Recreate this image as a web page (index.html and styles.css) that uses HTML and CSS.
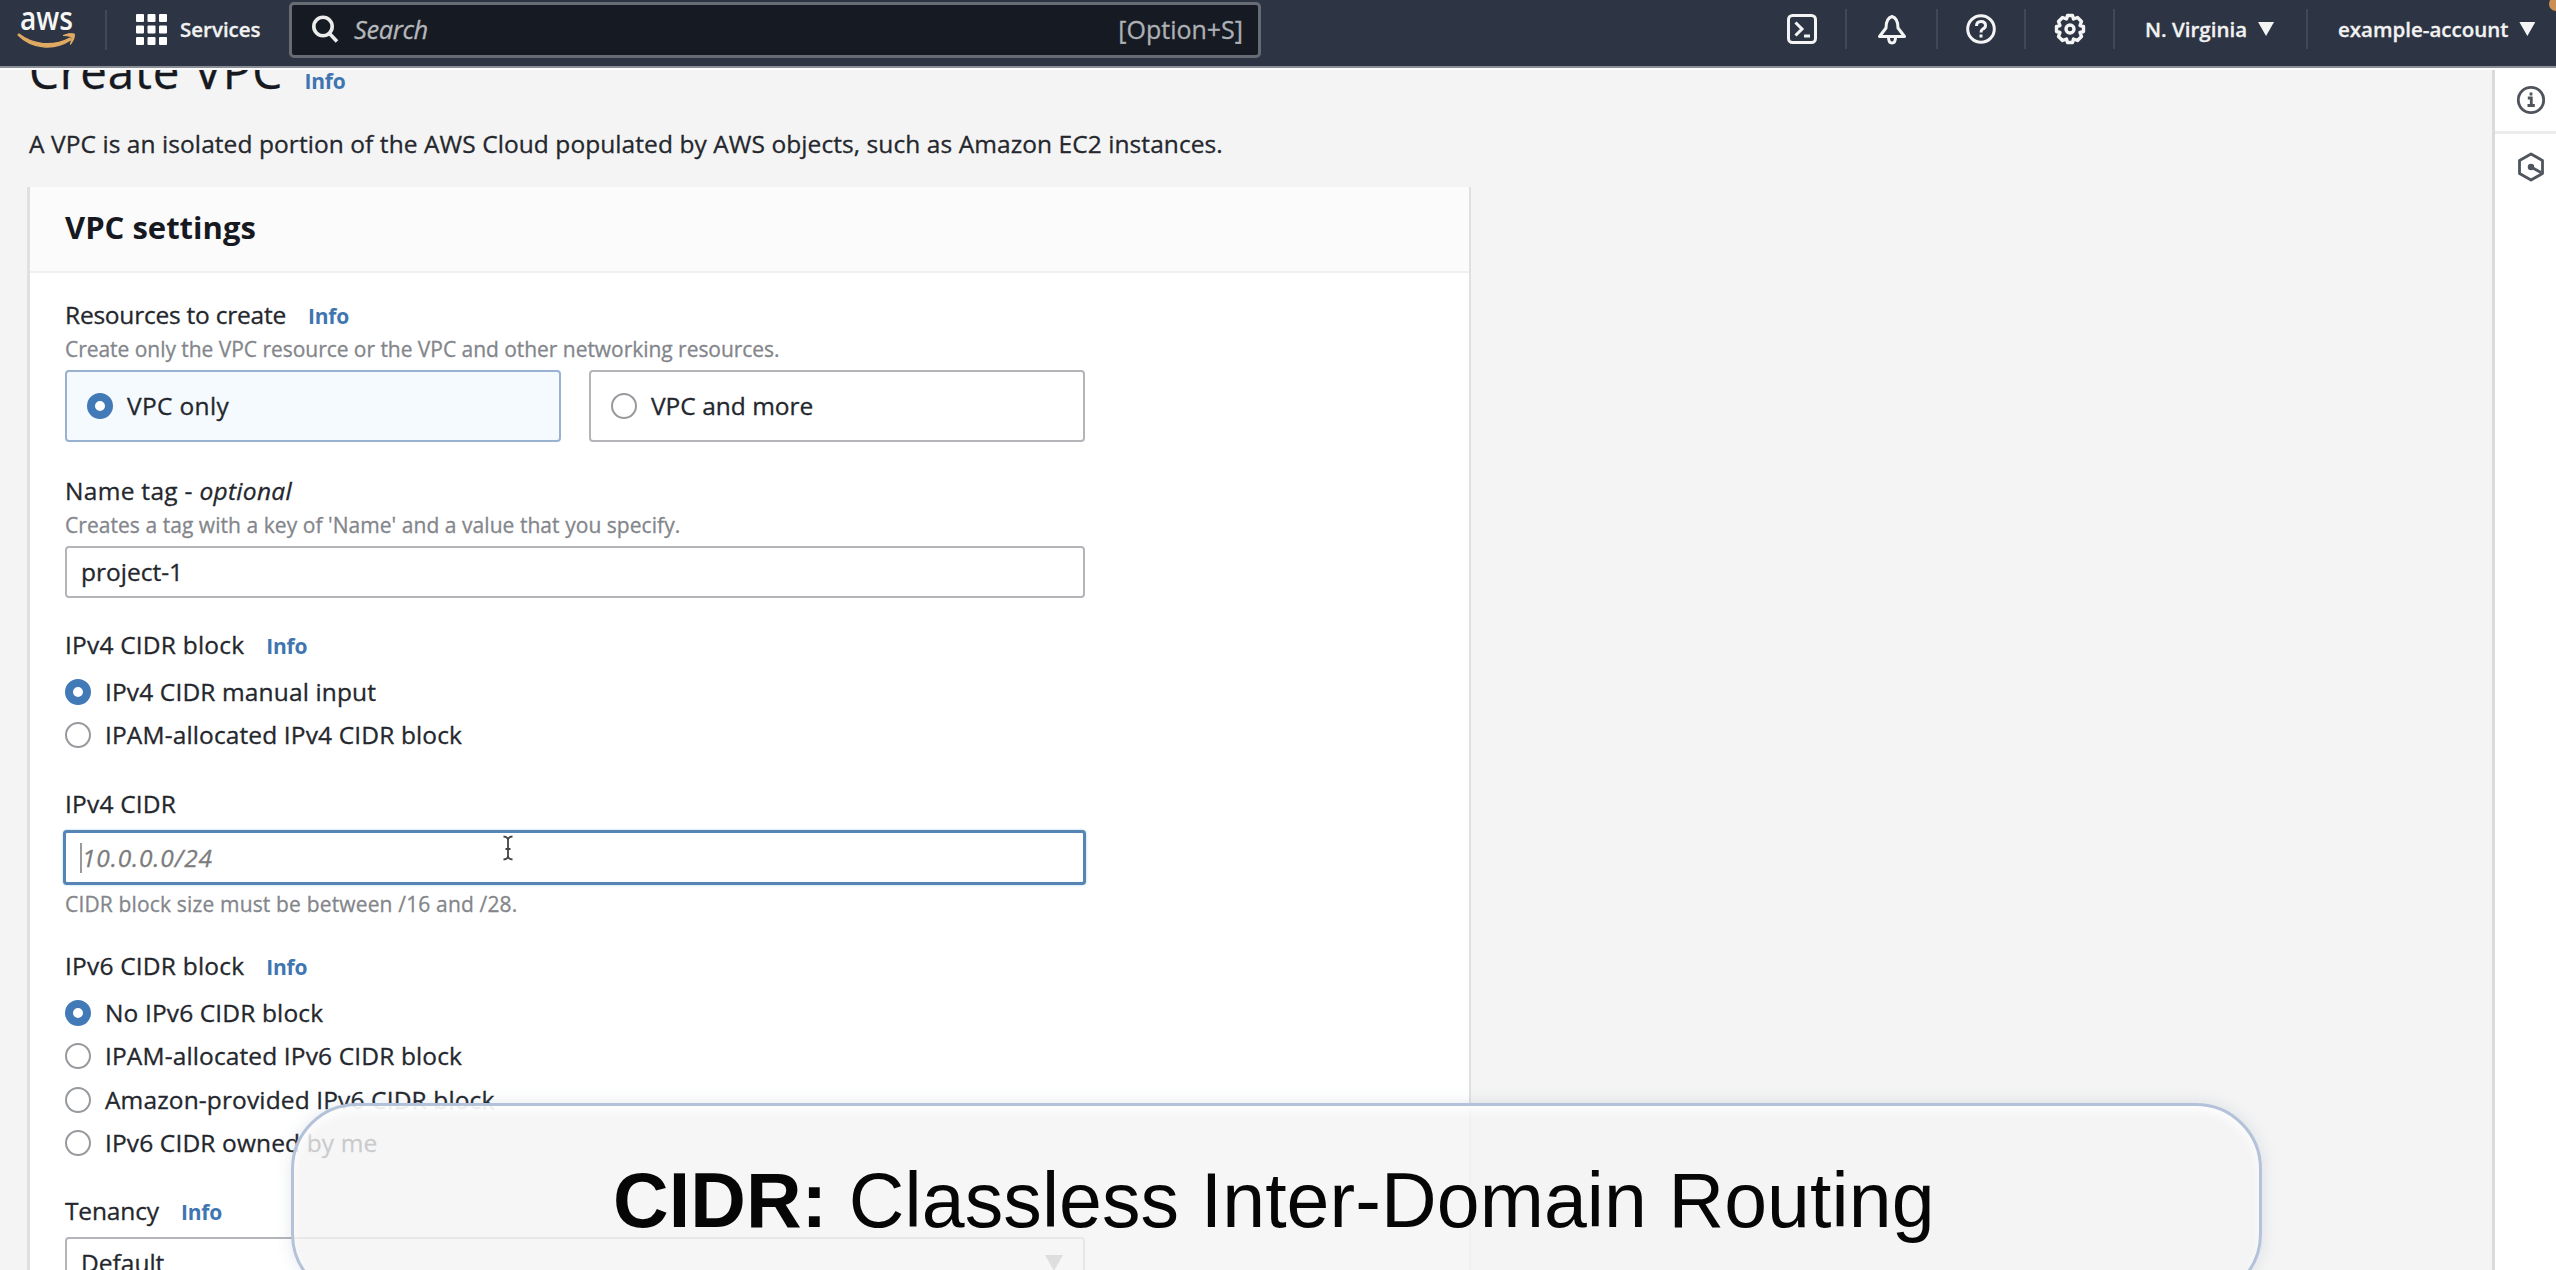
FILE: index.html
```html
<!DOCTYPE html>
<html lang="en">
<head>
<meta charset="utf-8">
<title>Create VPC</title>
<link rel="stylesheet" href="styles.css">
</head>
<body>
<header class="topbar">
  <svg class="logo" width="60" height="42" viewBox="0 0 60 42">
    <text class="logo-text" x="2" y="21" textLength="53" lengthAdjust="spacingAndGlyphs">aws</text>
    <path d="M1 25 C15 36 35 38 52 29 L52.500 31 C36 42 14 40 0 26 Z" fill="#e0aa62" stroke="#e0aa62" stroke-width="1.200" stroke-linejoin="round"/>
    <path d="M45 26.500 Q51 23.500 56.500 25 Q57 30 52.500 35.500 Q54 30 53 27.500 Q49 26.500 45 26.500 Z" fill="#e0aa62" stroke="#e0aa62"/>
  </svg>
  <span class="sep sep-logo"></span>
  <svg class="grid-icon" width="31" height="32" viewBox="0 0 31 32" fill="#fff">
    <rect x="0" y="0" width="8" height="8" rx="1"/><rect x="11.500" y="0" width="8" height="8" rx="1"/><rect x="23" y="0" width="8" height="8" rx="1"/>
    <rect x="0" y="11.500" width="8" height="8" rx="1"/><rect x="11.500" y="11.500" width="8" height="8" rx="1"/><rect x="23" y="11.500" width="8" height="8" rx="1"/>
    <rect x="0" y="23" width="8" height="8" rx="1"/><rect x="11.500" y="23" width="8" height="8" rx="1"/><rect x="23" y="23" width="8" height="8" rx="1"/>
  </svg>
  <span class="nav-text services">Services</span>
  <div class="search">
    <svg width="28" height="28" viewBox="0 0 28 28" fill="none" stroke="#ececec" stroke-width="3.600"><circle cx="12" cy="11.500" r="9.200"/><path d="M18.500 18.500 L26 26.500"/></svg>
    <span class="search-hint">Search</span>
    <span class="search-key">[Option+S]</span>
  </div>
  <nav class="tools">
    <span class="tool tool-shell"><svg width="32" height="32" viewBox="0 0 32 32" fill="none" stroke="#f4f4f4" stroke-width="3"><rect x="2.500" y="2.500" width="27" height="27" rx="4"/><path d="M9.500 9.500 L16 16 L9.500 22.500 M18 23 H24"/></svg></span>
    <span class="tool tool-bell"><svg width="32" height="32" viewBox="0 0 32 32" fill="none" stroke="#f4f4f4" stroke-width="3" stroke-linejoin="round"><path d="M16 3.500 C10.500 5 10 10 10 15 L3.500 23.500 H28.500 L22 15 C22 10 21.500 5 16 3.500 Z"/><path d="M12.500 24 Q12.500 30 16 30 Q19.500 30 19.500 24"/></svg></span>
    <span class="tool tool-help"><svg width="32" height="32" viewBox="0 0 32 32" fill="none" stroke="#f4f4f4" stroke-width="3"><circle cx="16" cy="16" r="13.300"/><path d="M11.500 13 Q11.500 8.500 16 8.500 Q20.500 8.500 20.500 12.500 Q20.500 15 17.500 16.200 Q16 17 16 19.500"/><path d="M16 21.500 V24.500"/></svg></span>
    <span class="tool tool-gear"><svg width="32" height="32" viewBox="0 0 32 32" fill="none" stroke="#f4f4f4" stroke-width="3.400" stroke-linejoin="round"><path d="M13.500 2.500 H18.500 L19.500 6 L23.500 4.500 L27.500 8.500 L26 12.500 L29.500 13.500 V18.500 L26 19.500 L27.500 23.500 L23.500 27.500 L19.500 26 L18.500 29.500 H13.500 L12.500 26 L8.500 27.500 L4.500 23.500 L6 19.500 L2.500 18.500 V13.500 L6 12.500 L4.500 8.500 L8.500 4.500 L12.500 6 Z"/><circle cx="16" cy="16" r="4"/></svg></span>
    <span class="menu menu-region"><span class="nav-text">N. Virginia</span><i class="caret-down"></i></span>
    <span class="menu menu-account"><span class="nav-text">example-account</span><i class="caret-down"></i></span>
  </nav>
  <i class="dot"></i>
</header>

<div class="page">
  <main class="content">
    <h1 class="title">Create VPC <a class="info info-title">Info</a></h1>
    <p class="lead">A VPC is an isolated portion of the AWS Cloud populated by AWS objects, such as Amazon EC2 instances.</p>
    <section class="card">
      <div class="card-head"><h2>VPC settings</h2></div>
      <div class="card-body">
        <div class="field field-resources">
          <div class="label"><span class="t-res">Resources to create</span><a class="info">Info</a></div>
          <div class="hint">Create only the VPC resource or the VPC and other networking resources.</div>
          <div class="tiles">
            <div class="tile tile-on"><i class="radio on"></i><span class="t-only">VPC only</span></div>
            <div class="tile"><i class="radio"></i><span>VPC and more</span></div>
          </div>
        </div>
        <div class="field field-name">
          <div class="label"><span class="t-name">Name tag - <em>optional</em></span></div>
          <div class="hint hint-name">Creates a tag with a key of 'Name' and a value that you specify.</div>
          <div class="input">project-1</div>
        </div>
        <div class="field field-v4block">
          <div class="label"><span>IPv4 CIDR block</span><a class="info">Info</a></div>
          <div class="radios">
            <div class="option"><i class="radio on"></i><span>IPv4 CIDR manual input</span></div>
            <div class="option"><i class="radio"></i><span>IPAM-allocated IPv4 CIDR block</span></div>
          </div>
        </div>
        <div class="field field-v4">
          <div class="label"><span>IPv4 CIDR</span></div>
          <div class="input focused"><i class="text-caret"></i><span class="placeholder">10.0.0.0/24</span></div>
          <div class="hint hint-size">CIDR block size must be between /16 and /28.</div>
        </div>
        <div class="field field-v6">
          <div class="label"><span>IPv6 CIDR block</span><a class="info">Info</a></div>
          <div class="radios">
            <div class="option"><i class="radio on"></i><span>No IPv6 CIDR block</span></div>
            <div class="option"><i class="radio"></i><span>IPAM-allocated IPv6 CIDR block</span></div>
            <div class="option"><i class="radio"></i><span>Amazon-provided IPv6 CIDR block</span></div>
            <div class="option"><i class="radio"></i><span>IPv6 CIDR owned by me</span></div>
          </div>
        </div>
        <div class="field field-tenancy">
          <div class="label"><span class="t-ten">Tenancy</span><a class="info">Info</a></div>
          <div class="input select"><span>Default</span><i class="caret-down"></i></div>
        </div>
      </div>
    </section>
  </main>
  <aside class="rail">
    <div class="rail-item rail-info"><svg width="30" height="30" viewBox="0 0 30 30" fill="none" stroke="#50545c" stroke-width="2.800"><circle cx="15" cy="15" r="12.700"/><path d="M15 7.500 V10.500 M11.800 13 H15.300 V20.500 M11.500 20.500 H18.800"/></svg></div>
    <div class="rail-item rail-hex"><svg width="30" height="30" viewBox="0 0 30 30" fill="none" stroke="#50545c" stroke-width="2.800" stroke-linejoin="round"><path d="M15 2 L26.500 8.500 V21.500 L15 28 L3.500 21.500 V8.500 Z"/><circle cx="15" cy="15" r="2.500" fill="#50545c" stroke-width="1.500"/><path d="M15 15 L25 20.500"/></svg></div>
  </aside>
</div>

<svg class="pointer" width="12" height="26" viewBox="0 0 12 26" fill="none" stroke="#444" stroke-width="1.800"><path d="M1.500 1.500 Q6 2 6 5 Q6 2 10.500 1.500 M6 5 V21 M3.500 14 H8.500 M1.500 24.500 Q6 24 6 21 Q6 24 10.500 24.500"/></svg>
<div class="callout"><strong>CIDR:</strong> Classless Inter-Domain Routing</div>
</body>
</html>
```
FILE: styles.css
```css
* { box-sizing: border-box; }
html, body { height: 1270px; overflow: hidden; }
body {
  margin: 0;
  position: relative;
  background: #f4f4f4;
  color: #24272d;
  font: 24.5px/30px "Open Sans", sans-serif;
  -webkit-text-stroke: 0.3px;
}
h1, h2, p { margin: 0; }

/* Top navigation */
.topbar {
  position: relative;
  display: flex;
  align-items: flex-start;
  height: 68px;
  background: #2d3544;
  border-bottom: 2px solid #8b9098;
  box-shadow: 0 2px 0 #fdfdfd;
  z-index: 1;
}
.logo { margin: 9px 0 0 18px; flex: none; overflow: visible; }
.logo-text { font: 600 33px "Open Sans", sans-serif; fill: #f6f6f6; }
.sep { width: 2px; height: 40px; margin-top: 10px; background: #414957; }
.sep-logo { margin-left: 27px; }
.grid-icon { margin: 14px 0 0 29px; flex: none; }
.nav-text { color: #f2f2f2; font-size: 20.5px; font-weight: 600; line-height: 30px; white-space: nowrap; }
.services { width: 93px; margin: 14px 0 0 13px; }
.search {
  display: flex;
  align-items: center;
  width: 972px;
  height: 56px;
  margin: 2px 0 0 16px;
  padding: 0 15px 2px 19px;
  background: #161a22;
  border: 3px solid #666b74;
  border-radius: 5px;
  flex: none;
}
.search-hint { margin-left: 15px; color: #b5b7ba; font-size: 25.5px; font-style: italic; letter-spacing: -0.4px; }
.search-key { margin-left: auto; color: #adb0b5; font-size: 25px; }
.tools { display: flex; position: relative; margin-left: auto; height: 40px; margin-top: 9px; }
.tool { display: flex; align-items: center; justify-content: center; border-right: 2px solid #414957; }
.tool svg { flex: none; }
.tool-shell { width: 61px; justify-content: flex-start; }
.tool-bell { width: 91px; }
.tool-help { width: 88px; }
.tool-gear { width: 89px; }
.menu { display: flex; align-items: center; padding-left: 30px; }
.menu-region { width: 193px; border-right: 2px solid #414957; }
.menu-account { width: 248px; }
.caret-down { width: 16px; height: 14px; margin-left: 11px; background: #f4f4f4; clip-path: polygon(0 0, 100% 0, 50% 100%); flex: none; }
.dot { position: absolute; right: -7px; top: -3px; width: 14px; height: 14px; border-radius: 50%; background: #c98f55; }

/* Page frame */
.page { display: flex; height: 1202px; overflow: hidden; }
.content { flex: 1; padding-left: 27px; }
.title { margin-top: -27px; padding-left: 2px; height: 60px; color: #16191f; font-size: 47.5px; font-weight: 500; line-height: 60px; letter-spacing: 0.9px; }
.lead { margin: 28px 0; padding-left: 2px; letter-spacing: 0.07px; }
.info { margin-left: 22px; color: #3f75b0; font-size: 21px; font-weight: 700; letter-spacing: -0.2px; -webkit-text-stroke: 0; }
.info-title { margin-left: 8px; }

/* Settings card */
.card { width: 1444px; height: 1200px; background: #fff; border: solid #dfe0e1; border-width: 0 2px 0 3px; }
.card-head { height: 86px; padding: 20px 0 0 35px; background: #fbfbfb; border-bottom: 2px solid #f0f0f0; }
.card-head h2 { color: #16191f; font-size: 31px; font-weight: 700; line-height: 40px; -webkit-text-stroke: 0; }
.card-body { width: 1054px; padding-top: 27px; margin-left: 35px; }
.label { height: 30px; white-space: nowrap; letter-spacing: 0.2px; }
.hint { height: 30px; margin-top: 4px; color: #83868b; font-size: 21px; white-space: nowrap; letter-spacing: -0.04px; }
.hint-name { letter-spacing: 0.05px; }
.tiles { display: grid; grid-template-columns: 496px 496px; gap: 28px; margin-top: 6px; }
.tile { display: flex; align-items: center; height: 72px; padding-left: 20px; border: 2px solid #b3b5b9; border-radius: 4px; }
.tile-on { background: #f5faff; border-color: #98b2d0; }
.radio { width: 26px; height: 26px; margin-right: 14px; border: 2.5px solid #96999d; border-radius: 50%; background: #fff; flex: none; }
.radio.on { border: 8px solid #4279b7; }
.input { display: flex; align-items: center; width: 1020px; height: 52px; margin-top: 6px; padding-left: 14px; background: #fff; border: 2px solid #b3b5b9; border-radius: 4px; }
.focused { width: 1023px; height: 55px; margin: 11px 0 0 -2px; padding-left: 14px; border: 3px solid #5584b5; box-shadow: 0 0 2px #8fc0dd; }
.text-caret { width: 2px; height: 30px; background: #9a9a9a; }
.placeholder { color: #7c7c7c; font-style: italic; letter-spacing: 0.85px; }
.hint.hint-size { letter-spacing: 0.16px; }
.option { display: flex; align-items: center; height: 43.25px; padding-bottom: 1px; letter-spacing: 0.13px; }
.radios { margin-top: 11px; }
.t-res { letter-spacing: -0.23px; }
.t-only { letter-spacing: 0.33px; }
.t-ten { letter-spacing: -0.15px; }
.t-name { letter-spacing: 0.3px; }
.field-name { margin-top: 34px; }
.field-v4block { margin-top: 32px; }
.field-v4 { margin-top: 31.5px; }
.field-v6 { margin-top: 32px; }
.field-tenancy { margin-top: 31px; }
.select { justify-content: space-between; margin-top: 11px; padding-right: 20px; }
.select .caret-down { width: 18px; height: 16px; background: #858585; }

/* Right tool rail */
.rail { width: 64px; background: #fff; border-left: 3px solid #dadbdc; }
.rail-item { display: flex; align-items: center; justify-content: center; padding-left: 10px; height: 66px; }
.rail-info { border-bottom: 3px solid #ececec; }

/* Overlays */
.pointer { position: absolute; left: 502px; top: 835px; }
.callout {
  position: absolute;
  left: 291px;
  top: 1103px;
  width: 1971px;
  height: 197px;
  padding: 44px 0 0 319px;
  background: rgba(244, 244, 244, 0.8);
  border: 3px solid #b4c2d9;
  border-radius: 66px;
  box-shadow: 0 0 16px rgba(90, 110, 150, 0.16), inset 0 6px 8px rgba(255, 255, 255, 0.8);
  color: #060606;
  font: 77px/100px "Liberation Sans", Arial, sans-serif;
  letter-spacing: 0.1px;
  white-space: nowrap;
  -webkit-text-stroke: 0;
}
```
